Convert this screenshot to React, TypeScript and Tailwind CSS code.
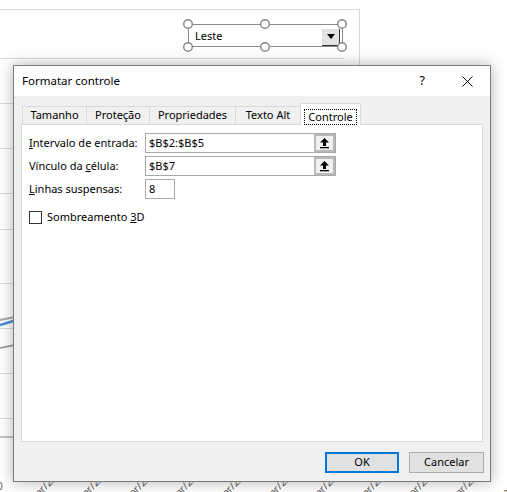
import React from 'react';

const font = { fontFamily: '"Segoe UI", "Noto Sans", sans-serif' };

// worksheet behind the dialog: chart grid, series lines, axis labels and the combo box
function SheetBackground() {
  const gridY = [103, 148, 193, 229, 283, 328, 373, 418];
  const labelX = [57, 104, 151, 197, 244, 291, 337, 384, 431, 477, 524];
  const handles: Array<[number, number]> = [
    [188, 24], [265, 24], [342, 24],
    [188, 47], [265, 47], [342, 47],
  ];
  return (
    <svg className="absolute inset-0" width={507} height={492} viewBox="0 0 507 492">
      <line x1={0} y1={9.5} x2={359} y2={9.5} stroke="#d9d9d9" />
      <line x1={359.5} y1={9} x2={359.5} y2={70} stroke="#d9d9d9" />
      <line x1={0} y1={58.5} x2={344} y2={58.5} stroke="#d9d9d9" />
      {gridY.map((y) => (
        <line key={y} x1={0} y1={y + 0.5} x2={20} y2={y + 0.5} stroke="#d9d9d9" />
      ))}
      <line x1={0} y1={320} x2={20} y2={316} stroke="#a6a6a6" strokeWidth={2} />
      <line x1={0} y1={325} x2={20} y2={319} stroke="#4a8fd0" strokeWidth={2.5} />
      <line x1={0} y1={348} x2={20} y2={344} stroke="#a6a6a6" strokeWidth={2} />
      <line x1={0} y1={437} x2={20} y2={437} stroke="#b0b0b0" strokeWidth={1.5} />
      <text x={-3} y={490} fontSize={10} fill="#595959" style={font}>0</text>
      {labelX.map((x) => (
        <text
          key={x}
          x={x}
          y={479}
          fontSize={10}
          fill="#595959"
          textAnchor="end"
          transform={`rotate(-45 ${x} 479)`}
          style={font}
        >
          mar/22
        </text>
      ))}

      {/* form control (combo box) with selection handles */}
      <rect x={188.5} y={24.5} width={154} height={22} fill="#fff" stroke="#8c8c8c" />
      <text x={195} y={40} fontSize={11} fill="#000" style={font}>Leste</text>
      <rect x={322} y={29} width={18} height={16} fill="#e3e3e3" />
      <line x1={322} y1={45.5} x2={339} y2={45.5} stroke="#333" />
      <line x1={339.5} y1={29} x2={339.5} y2={46} stroke="#333" />
      <path d="M327 34 L335 34 L331 39 Z" fill="#000" />
      {handles.map(([x, y]) => (
        <circle key={`${x}-${y}`} cx={x} cy={y} r={4.3} fill="#fff" stroke="#858585" strokeWidth={1.4} />
      ))}
    </svg>
  );
}

function PickerButton() {
  return (
    <div className="ml-auto h-full w-[21px] bg-[#f0f0f0] border-2 border-[#b9b9b9] flex items-center justify-center">
      <svg width={11} height={12} viewBox="0 0 11 12">
        <path d="M5.5 1 L10 5.5 L7 5.5 L7 9 L4 9 L4 5.5 L1 5.5 Z" fill="#000" />
        <rect x={1} y={10} width={9} height={1.3} fill="#000" />
      </svg>
    </div>
  );
}

function Field({ label, value, width, picker }: { label: React.ReactNode; value: string; width: string; picker?: boolean }) {
  return (
    <div className="flex items-center h-[20px]">
      <div className="w-[116px] whitespace-nowrap text-[11px] text-black">{label}</div>
      <div className={`${width} h-[20px] flex items-center border border-[#a9a9a9] bg-white`}>
        <span className="pl-[3px] text-[11px] text-black">{value}</span>
        {picker && <PickerButton />}
      </div>
    </div>
  );
}

const tabs = [
  { name: 'Tamanho', w: 'w-[64px]' },
  { name: 'Proteção', w: 'w-[63px]' },
  { name: 'Propriedades', w: 'w-[86px]' },
  { name: 'Texto Alt', w: 'w-[65px]' },
];

export default function App() {
  return (
    <div className="relative w-[507px] h-[492px] bg-white overflow-hidden" style={font}>
      <SheetBackground />

      <div className="absolute left-[13px] top-[65px] w-[478px] h-[417px] border border-[#7a7a7a] bg-[#f0f0f0] flex flex-col shadow-[0_0_14px_rgba(0,0,0,0.3)]">
        {/* title bar */}
        <div className="h-[30px] bg-white flex items-center shrink-0">
          <span className="pl-[8px] text-[11.5px] text-black">Formatar controle</span>
          <span className="ml-auto text-[12.5px] text-black">?</span>
          <div className="w-[45px] ml-[20px] flex items-center justify-center">
            <svg width={11} height={11} viewBox="0 0 11 11">
              <path d="M0.5 0.5 L10.5 10.5 M10.5 0.5 L0.5 10.5" stroke="#000" strokeWidth={1} />
            </svg>
          </div>
        </div>

        <div className="flex-1 flex flex-col pt-[7px] px-[7px]">
          {/* tab strip */}
          <div className="flex items-end h-[21px] pl-px">
            {tabs.map((t) => (
              <div
                key={t.name}
                className={`${t.w} h-[18px] border-t border-l border-[#d9d9d9] flex items-center justify-center text-[11px] text-black`}
              >
                {t.name}
              </div>
            ))}
            <div className="relative z-10 -mb-px w-[61px] h-[22px] bg-white border border-b-0 border-[#d9d9d9] flex items-start justify-center pt-[5px]">
              <span className="px-[3px] leading-[14px] border border-dotted border-black text-[11px] text-black">Controle</span>
            </div>
          </div>

          {/* Controle page */}
          <div className="h-[318px] bg-white border border-[#d9d9d9] pt-[8px] pl-[7px] flex flex-col gap-[3px]">
            <Field label={<><u>I</u>ntervalo de entrada:</>} value="$B$2:$B$5" width="w-[191px]" picker />
            <Field label={<>Vínculo da <u>c</u>élula:</>} value="$B$7" width="w-[191px]" picker />
            <Field label={<><u>L</u>inhas suspensas:</>} value="8" width="w-[30px]" />
            <label className="flex items-center gap-[5px] mt-[7px] text-[11px] text-black">
              <span className="w-[13px] h-[13px] border border-[#333] bg-white" />
              <span>Sombreamento <u>3</u>D</span>
            </label>
          </div>

          {/* dialog buttons */}
          <div className="flex justify-end gap-[10px] mt-[10px]">
            <button className="w-[74px] h-[21px] bg-[#e1e1e1] border-2 border-[#0078d7] text-[11px] text-black">OK</button>
            <button className="w-[75px] h-[21px] bg-[#e1e1e1] border border-[#adadad] text-[11px] text-black mr-[-1px]">Cancelar</button>
          </div>
        </div>
      </div>
    </div>
  );
}
